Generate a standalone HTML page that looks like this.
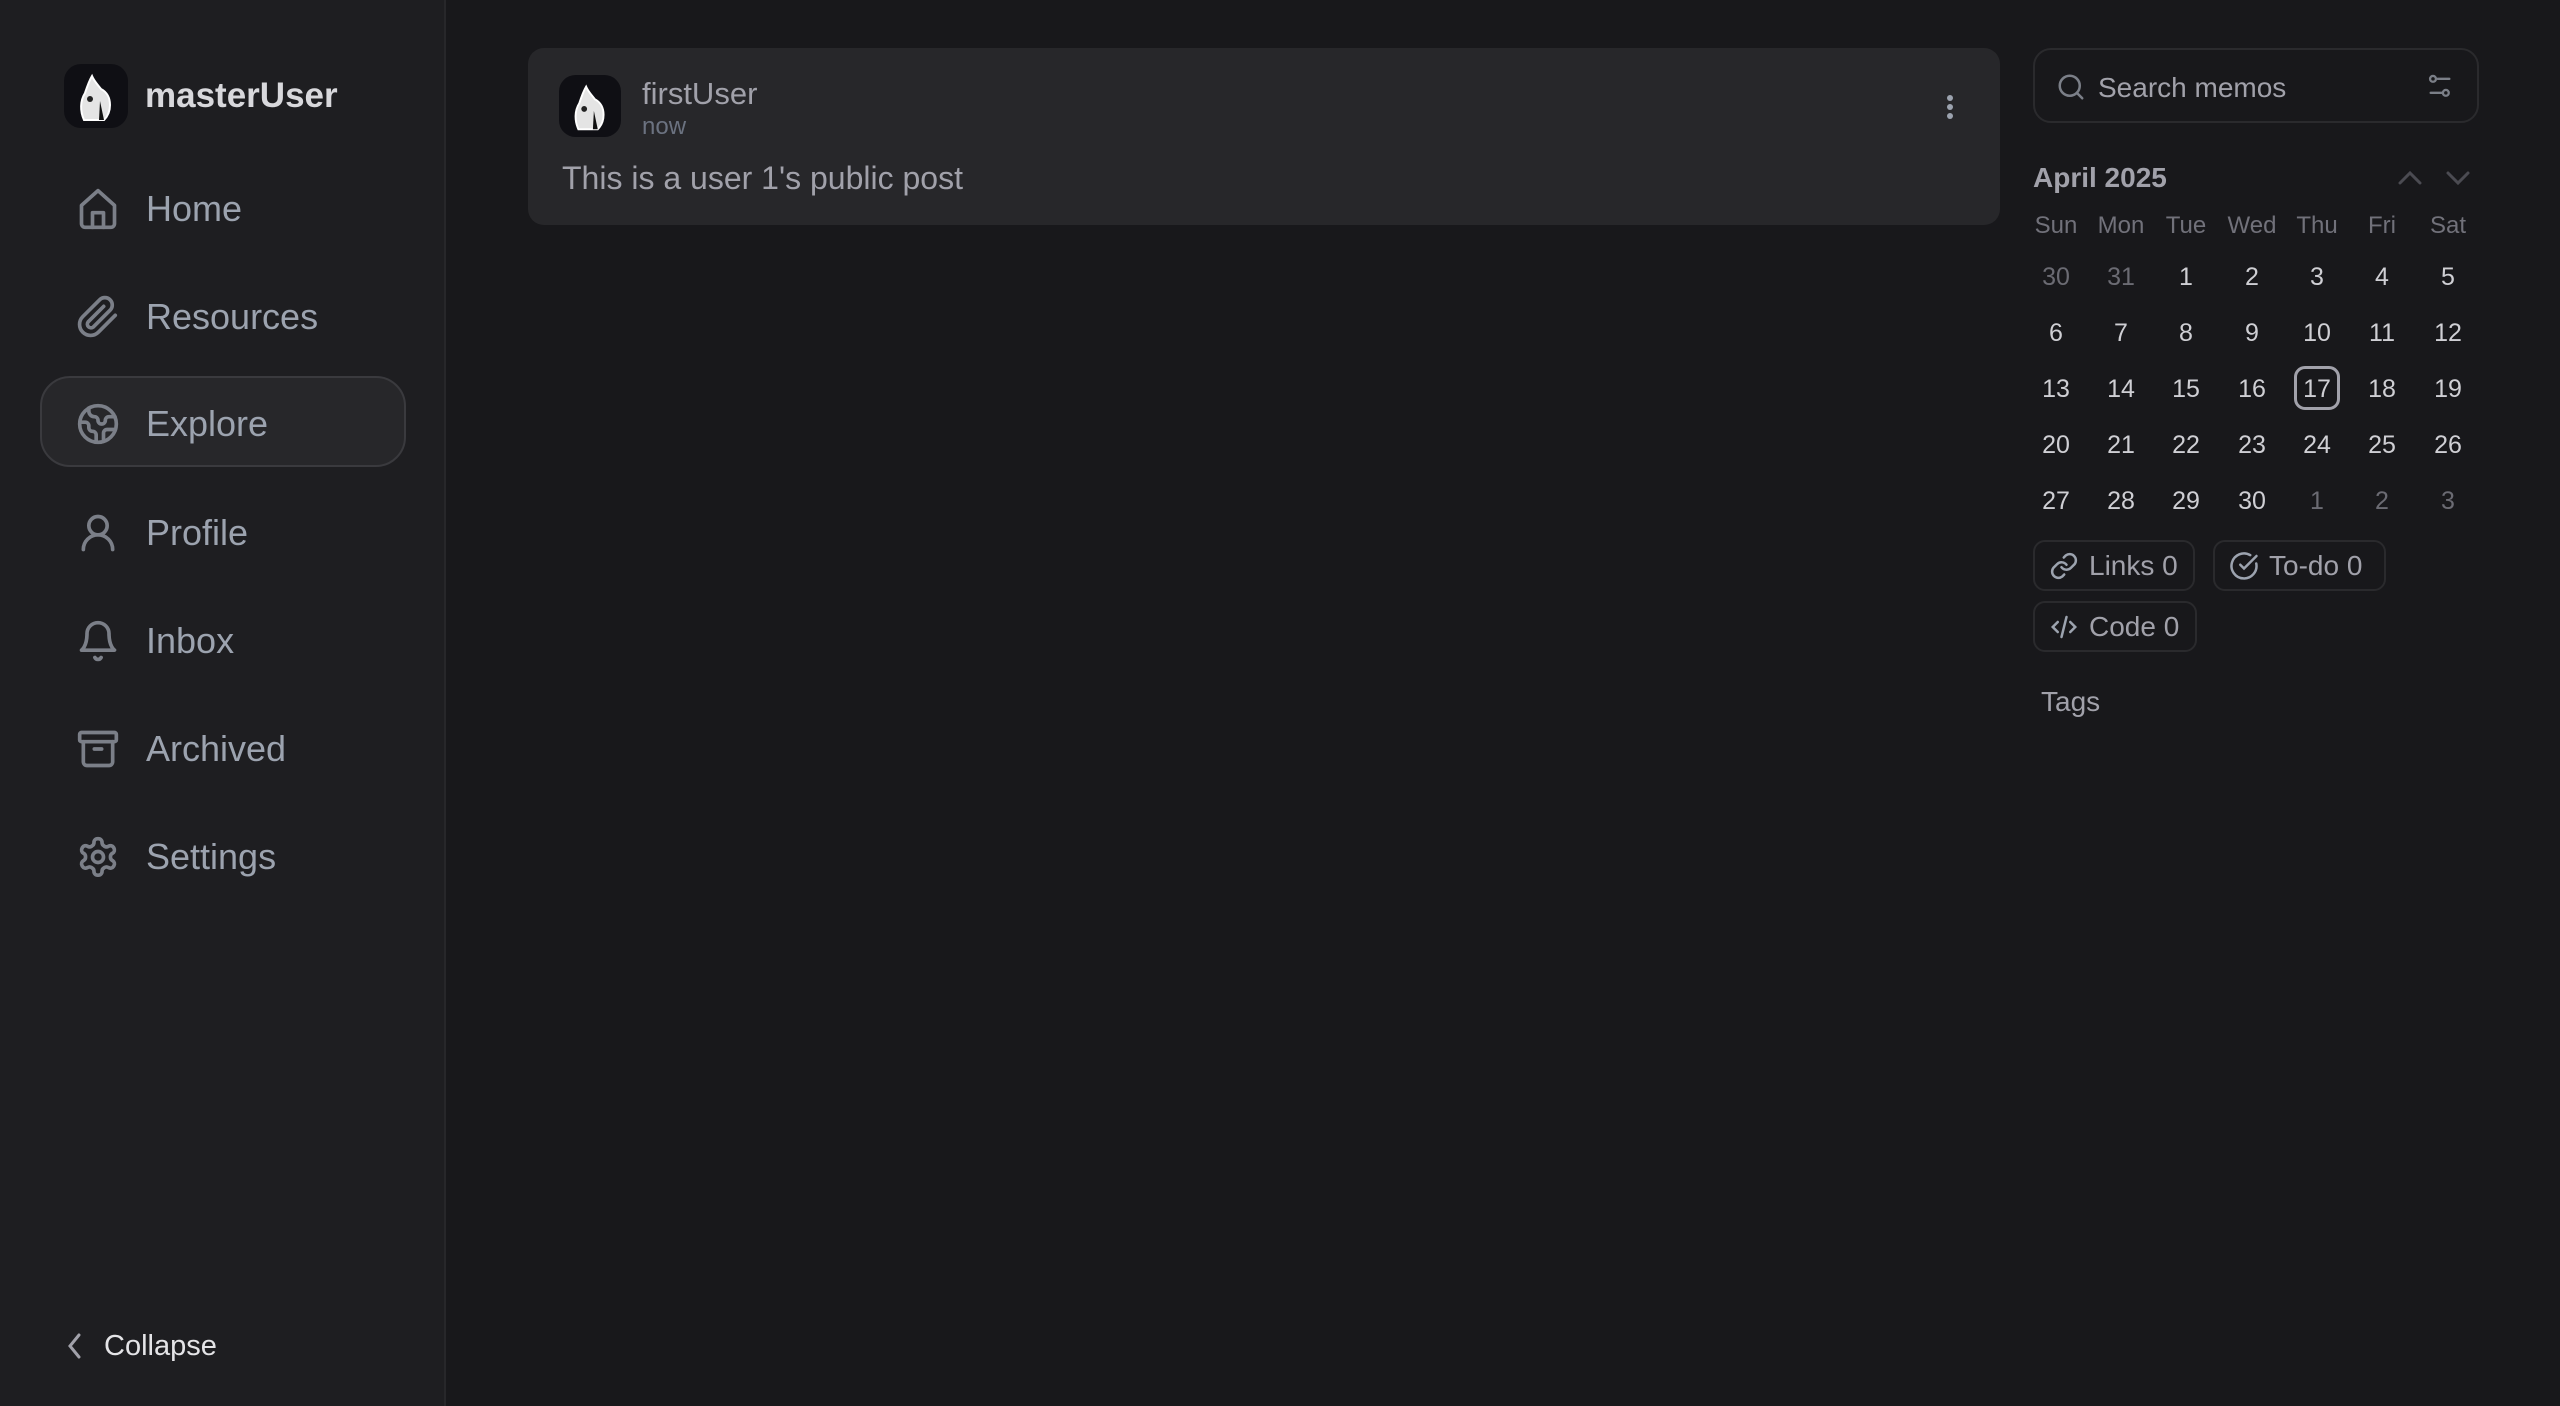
<!DOCTYPE html>
<html><head><meta charset="utf-8"><style>
*{box-sizing:border-box;margin:0;padding:0}
body{width:2560px;height:1406px;background:#18181b;font-family:"Liberation Sans",sans-serif;position:relative;overflow:hidden}
.a{position:absolute}
.side{left:0;top:0;width:446px;height:1406px;background:#1e1e21;border-right:2px solid #27272a}
.nav{left:76px;width:300px;height:44px;display:flex;align-items:center;color:#9ca3af;font-size:36px}
.nav svg{width:44px;height:44px;margin-right:26px;flex:none}
.ic{fill:none;stroke:#7b7f88;stroke-width:2;stroke-linecap:round;stroke-linejoin:round}
.cal div{position:absolute;width:60px;text-align:center;font-size:25px;color:#cfcfd4}
.hd div{color:#71717a;font-size:24px}
.chip{position:absolute;height:51px;border:2px solid #2a2a2d;border-radius:12px;color:#a1a1aa;font-size:28px;display:flex;align-items:center;padding-left:14px}
.chip svg{width:30px;height:30px;margin-right:10px}
</style></head><body>
<div class="a side"></div>
<svg class="a" style="left:64px;top:64px" width="64" height="64" viewBox="0 0 64 64"><rect width="64" height="64" rx="17" fill="#0f0f14"/><path d="M20 56c-4-9-4-19 1-27 2-6 4-12 7-17 2 5 6 9 9 13 6 3 9 9 9 16 0 6-2 11-6 15z" fill="#e4e4e4" stroke="#fff" stroke-width="2"/><circle cx="26" cy="35" r="3" fill="#222"/><path d="M36 37l4 19h-5z" fill="#111"/></svg>
<div class="a" style="left:145px;top:76px;font-size:35px;font-weight:bold;color:#d8d8dc">masterUser</div>

<div class="a" style="left:40px;top:376px;width:366px;height:91px;border-radius:30px;background:#27272a;border:2px solid #3a3a3e"></div>

<div class="a nav" style="top:187px"><svg viewBox="0 0 24 24" class="ic"><path d="M3 10l9-8 9 8v10a2 2 0 0 1-2 2H5a2 2 0 0 1-2-2z"/><path d="M9 22v-8h6v8"/></svg>Home</div>
<div class="a nav" style="top:295px"><svg viewBox="0 0 24 24" class="ic"><path d="M21.4 11.1l-9.2 9.2a6 6 0 0 1-8.5-8.5l9.2-9.2a4 4 0 0 1 5.7 5.7l-9.2 9.2a2 2 0 0 1-2.8-2.8l8.5-8.5"/></svg>Resources</div>
<div class="a nav" style="top:402px"><svg viewBox="0 0 24 24" class="ic"><circle cx="12" cy="12" r="10"/><path d="M21.5 15H17a2 2 0 0 0-2 2v4.5M7 3.3V5a3 3 0 0 0 3 3 2 2 0 0 1 2 2c0 1.1.9 2 2 2a2 2 0 0 0 2-2c0-1.1.9-2 2-2h3.2M11 21.9V18a2 2 0 0 0-2-2 2 2 0 0 1-2-2v-1a2 2 0 0 0-2-2H2.1"/></svg>Explore</div>
<div class="a nav" style="top:511px"><svg viewBox="0 0 24 24" class="ic"><circle cx="12" cy="8" r="5"/><path d="M20 21a8 8 0 0 0-16 0"/></svg>Profile</div>
<div class="a nav" style="top:619px"><svg viewBox="0 0 24 24" class="ic"><path d="M6 8a6 6 0 0 1 12 0c0 7 3 9 3 9H3s3-2 3-9"/><path d="M10.3 21a1.9 1.9 0 0 0 3.4 0"/></svg>Inbox</div>
<div class="a nav" style="top:727px"><svg viewBox="0 0 24 24" class="ic"><rect x="2" y="3" width="20" height="5" rx="1"/><path d="M4 8v11a2 2 0 0 0 2 2h12a2 2 0 0 0 2-2V8M10 12h4"/></svg>Archived</div>
<div class="a nav" style="top:835px"><svg viewBox="0 0 24 24" class="ic"><path d="M12.2 2h-.4a2 2 0 0 0-2 2v.2a2 2 0 0 1-1 1.7l-.4.3a2 2 0 0 1-2 0l-.2-.1a2 2 0 0 0-2.7.7l-.2.4a2 2 0 0 0 .7 2.7l.2.1a2 2 0 0 1 1 1.7v.5a2 2 0 0 1-1 1.7l-.2.1a2 2 0 0 0-.7 2.7l.2.4a2 2 0 0 0 2.7.7l.2-.1a2 2 0 0 1 2 0l.4.3a2 2 0 0 1 1 1.7v.2a2 2 0 0 0 2 2h.4a2 2 0 0 0 2-2v-.2a2 2 0 0 1 1-1.7l.4-.3a2 2 0 0 1 2 0l.2.1a2 2 0 0 0 2.7-.7l.2-.4a2 2 0 0 0-.7-2.7l-.2-.1a2 2 0 0 1-1-1.7v-.5a2 2 0 0 1 1-1.7l.2-.1a2 2 0 0 0 .7-2.7l-.2-.4a2 2 0 0 0-2.7-.7l-.2.1a2 2 0 0 1-2 0l-.4-.3a2 2 0 0 1-1-1.7V4a2 2 0 0 0-2-2z"/><circle cx="12" cy="12" r="3"/></svg>Settings</div>

<svg class="a" style="left:64px;top:1331px" width="22" height="30" viewBox="0 0 22 30"><path d="M15 4L6 15l9 11" fill="none" stroke="#a1a1aa" stroke-width="3" stroke-linecap="round"/></svg>
<div class="a" style="left:104px;top:1330px;font-size:29px;color:#e4e4e7">Collapse</div>

<div class="a" style="left:528px;top:48px;width:1472px;height:177px;background:#27272a;border-radius:16px"></div>
<svg class="a" style="left:559px;top:75px" width="62" height="62" viewBox="0 0 64 64"><rect width="64" height="64" rx="17" fill="#0f0f14"/><path d="M20 56c-4-9-4-19 1-27 2-6 4-12 7-17 2 5 6 9 9 13 6 3 9 9 9 16 0 6-2 11-6 15z" fill="#e4e4e4" stroke="#fff" stroke-width="2"/><circle cx="26" cy="35" r="3" fill="#222"/><path d="M36 37l4 19h-5z" fill="#111"/></svg>
<div class="a" style="left:642px;top:76px;font-size:31px;color:#a1a1aa">firstUser</div>
<div class="a" style="left:642px;top:113px;font-size:24px;color:#6b7280">now</div>
<div class="a" style="left:562px;top:160px;font-size:32px;color:#a1a1aa">This is a user 1's public post</div>
<svg class="a" style="left:1940px;top:93px" width="20" height="30"><circle cx="10" cy="5" r="3" fill="#9ca3af"/><circle cx="10" cy="14" r="3" fill="#9ca3af"/><circle cx="10" cy="23" r="3" fill="#9ca3af"/></svg>

<div class="a" style="left:2033px;top:48px;width:446px;height:75px;border:2px solid #2a2a2d;border-radius:18px"></div>
<svg class="a" style="left:2056px;top:72px" width="30" height="30" viewBox="0 0 24 24"><circle cx="11" cy="11" r="8" fill="none" stroke="#7b7f88" stroke-width="2"/><path d="M21 21l-4.3-4.3" stroke="#7b7f88" stroke-width="2" stroke-linecap="round"/></svg>
<div class="a" style="left:2098px;top:72px;font-size:28px;color:#a1a1aa">Search memos</div>
<svg class="a" style="left:2426px;top:73px" width="28" height="28" viewBox="0 0 24 24"><g fill="none" stroke="#7b7f88" stroke-width="2" stroke-linecap="round"><path d="M10 5h10M4 17h10"/><circle cx="6" cy="5" r="2.5"/><circle cx="17" cy="17" r="2.5"/></g></svg>

<div class="a" style="left:2033px;top:162px;font-size:28px;font-weight:bold;color:#a1a1aa">April 2025</div>
<svg class="a" style="left:2396px;top:165px" width="80" height="24"><g fill="none" stroke="#4b4b52" stroke-width="3" stroke-linecap="round"><path d="M4 18l10-10 10 10"/><path d="M52 8l10 10 10-10"/></g></svg>

<div class="cal hd">
<div style="left:2026px;top:212px">Sun</div><div style="left:2091px;top:212px">Mon</div><div style="left:2156px;top:212px">Tue</div><div style="left:2222px;top:212px">Wed</div><div style="left:2287px;top:212px">Thu</div><div style="left:2352px;top:212px">Fri</div><div style="left:2418px;top:212px">Sat</div>
</div>
<div class="cal">
<div style="left:2026px;top:263px;color:#6b6b73">30</div><div style="left:2091px;top:263px;color:#6b6b73">31</div><div style="left:2156px;top:263px">1</div><div style="left:2222px;top:263px">2</div><div style="left:2287px;top:263px">3</div><div style="left:2352px;top:263px">4</div><div style="left:2418px;top:263px">5</div>
<div style="left:2026px;top:319px">6</div><div style="left:2091px;top:319px">7</div><div style="left:2156px;top:319px">8</div><div style="left:2222px;top:319px">9</div><div style="left:2287px;top:319px">10</div><div style="left:2352px;top:319px">11</div><div style="left:2418px;top:319px">12</div>
<div style="left:2026px;top:375px">13</div><div style="left:2091px;top:375px">14</div><div style="left:2156px;top:375px">15</div><div style="left:2222px;top:375px">16</div><div style="left:2294px;top:366px;width:46px;height:44px;line-height:40px;border:3px solid #a1a1aa;border-radius:11px">17</div><div style="left:2352px;top:375px">18</div><div style="left:2418px;top:375px">19</div>
<div style="left:2026px;top:431px">20</div><div style="left:2091px;top:431px">21</div><div style="left:2156px;top:431px">22</div><div style="left:2222px;top:431px">23</div><div style="left:2287px;top:431px">24</div><div style="left:2352px;top:431px">25</div><div style="left:2418px;top:431px">26</div>
<div style="left:2026px;top:487px">27</div><div style="left:2091px;top:487px">28</div><div style="left:2156px;top:487px">29</div><div style="left:2222px;top:487px">30</div><div style="left:2287px;top:487px;color:#6b6b73">1</div><div style="left:2352px;top:487px;color:#6b6b73">2</div><div style="left:2418px;top:487px;color:#6b6b73">3</div>
</div>

<div class="chip" style="left:2033px;top:540px;width:162px"><svg viewBox="0 0 24 24"><g fill="none" stroke="#9ca3af" stroke-width="2" stroke-linecap="round"><path d="M10 13a5 5 0 0 0 7.5.5l3-3a5 5 0 0 0-7-7l-1.7 1.7"/><path d="M14 11a5 5 0 0 0-7.5-.5l-3 3a5 5 0 0 0 7 7l1.7-1.7"/></g></svg>Links 0</div>
<div class="chip" style="left:2213px;top:540px;width:173px"><svg viewBox="0 0 24 24"><g fill="none" stroke="#9ca3af" stroke-width="2" stroke-linecap="round"><path d="M21.8 10A10 10 0 1 1 17 3.3"/><path d="M9 11l3 3L22 4"/></g></svg>To-do 0</div>
<div class="chip" style="left:2033px;top:601px;width:164px"><svg viewBox="0 0 24 24"><g fill="none" stroke="#9ca3af" stroke-width="2" stroke-linecap="round"><path d="M7 8l-4 4 4 4M17 8l4 4-4 4M14 4l-4 16"/></g></svg>Code 0</div>
<div class="a" style="left:2041px;top:686px;font-size:28px;color:#a1a1aa">Tags</div>
</body></html>
